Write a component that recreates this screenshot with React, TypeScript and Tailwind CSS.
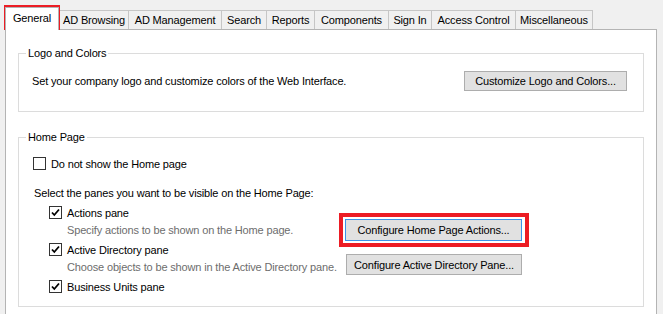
import type { ReactNode } from 'react';

const tabs = [
  { label: 'AD Browsing', w: 'w-[69px]' },
  { label: 'AD Management', w: 'w-[93px]' },
  { label: 'Search', w: 'w-[45px]' },
  { label: 'Reports', w: 'w-[48px]' },
  { label: 'Components', w: 'w-[74px]' },
  { label: 'Sign In', w: 'w-[43px]' },
  { label: 'Access Control', w: 'w-[84px]' },
  { label: 'Miscellaneous', w: 'w-[78px] border-r' },
];

function CheckBox({ checked }: { checked?: boolean }) {
  return (
    <span className="w-[13px] h-[13px] border border-[#333333] bg-white flex items-center justify-center shrink-0">
      {checked && (
        <svg width="11" height="11" viewBox="0 0 11 11">
          <path d="M2 5.5 L4.3 8 L9 2.5" fill="none" stroke="#000" strokeWidth="1.8" />
        </svg>
      )}
    </span>
  );
}

function CheckRow({ checked, children }: { checked?: boolean; children: ReactNode }) {
  return (
    <div className="flex items-center gap-[5px] h-[17px]">
      <CheckBox checked={checked} />
      <span className="whitespace-nowrap">{children}</span>
    </div>
  );
}

function WinButton({ children, focused, className = '' }: { children: ReactNode; focused?: boolean; className?: string }) {
  return (
    <button
      className={`bg-[#e1e1e1] border text-black leading-[14px] whitespace-nowrap shrink-0 ${
        focused ? 'border-[#3c93e8]' : 'border-[#adadad]'
      } ${className}`}
    >
      {children}
    </button>
  );
}

export default function App() {
  return (
    <div className="w-[663px] h-[314px] overflow-hidden bg-[#f0f0f0] relative text-[11px] leading-[14px] tracking-[-0.15px] text-black font-['Liberation_Sans',Arial,sans-serif]">
      {/* tab strip */}
      <div className="flex items-end h-[29px] pl-[5px]">
        <div className="w-[54px] h-[23px] -mb-px bg-white border-l border-t border-r border-[#b4b4b4] relative z-10 flex items-center justify-center pb-[3px]">
          General
        </div>
        {tabs.map((t) => (
          <div
            key={t.label}
            className={`${t.w} h-[19px] border-l border-t border-[#c6c6c6] bg-[#f0f0f0] flex items-center justify-center whitespace-nowrap`}
          >
            {t.label}
          </div>
        ))}
      </div>

      {/* tab page */}
      <div className="ml-[5px] w-[652px] h-[300px] bg-white border border-[#b4b4b4] pt-[16px] px-[12px]">
        <fieldset className="border border-[#dcdcdc]">
          <legend className="ml-[7px] px-[2px]">Logo and Colors</legend>
          <div className="flex items-center justify-between h-[20px] mt-[11px] mb-[20px] pl-[13px] pr-[16px]">
            <span className="whitespace-nowrap">Set your company logo and customize colors of the Web Interface.</span>
            <WinButton className="w-[163px] h-[20px]">Customize Logo and Colors...</WinButton>
          </div>
        </fieldset>

        <fieldset className="border border-[#dcdcdc] mt-[18px]">
          <legend className="ml-[7px] px-[2px]">Home Page</legend>
          <div className="pl-[14px] pb-[11px]">
            <div className="mt-[11px]">
              <CheckRow>Do not show the Home page</CheckRow>
            </div>
            <div className="mt-[12px] h-[17px] flex items-center pl-px whitespace-nowrap">
              Select the panes you want to be visible on the Home Page:
            </div>
            <div className="pl-[16px]">
              <div className="mt-[3px]">
                <CheckRow checked>Actions pane</CheckRow>
              </div>
              <div className="flex items-center h-[17px]">
                <span className="w-[296px] shrink-0 pl-[18px] text-[#6d6d6d] whitespace-nowrap">
                  Specify actions to be shown on the Home page.
                </span>
                <div className="relative shrink-0">
                  <WinButton focused className="w-[177px] h-[22px]">
                    Configure Home Page Actions...
                  </WinButton>
                  <div className="absolute -left-[6px] -top-[6px] w-[190px] h-[34px] border-[4px] border-[#ec1c24]" />
                </div>
              </div>
              <div className="mt-[3px]">
                <CheckRow checked>Active Directory pane</CheckRow>
              </div>
              <div className="flex items-center h-[17px]">
                <span className="w-[297px] shrink-0 pl-[18px] text-[#6d6d6d] whitespace-nowrap">
                  Choose objects to be shown in the Active Directory pane.
                </span>
                <WinButton className="w-[176px] h-[21px] mb-[4px]">Configure Active Directory Pane...</WinButton>
              </div>
              <div className="mt-[3px]">
                <CheckRow checked>Business Units pane</CheckRow>
              </div>
            </div>
          </div>
        </fieldset>
      </div>

      {/* annotation around the selected tab */}
      <div className="absolute left-[4px] top-[5px] w-[56px] h-[25px] border-[4px] border-[#ec1c24] pointer-events-none" />
    </div>
  );
}
